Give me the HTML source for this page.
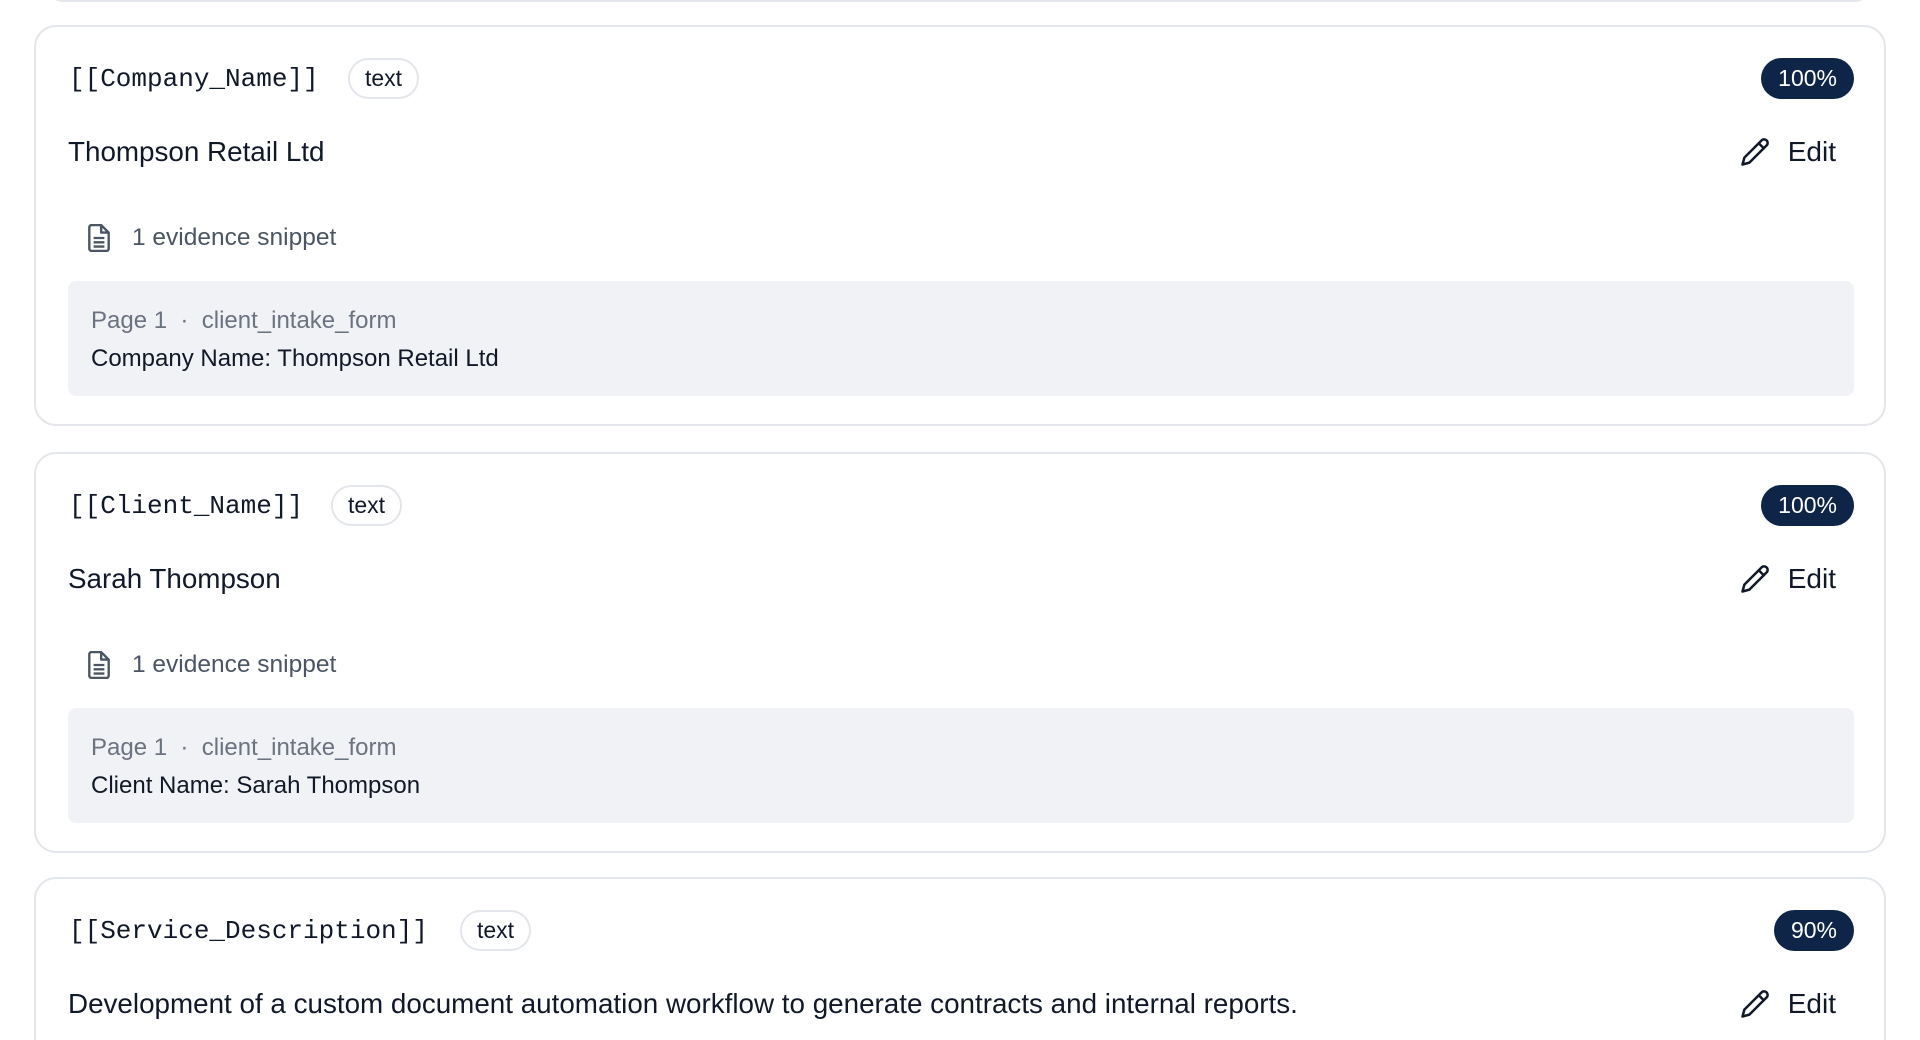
<!DOCTYPE html>
<html><head><style>
*{box-sizing:border-box;margin:0;padding:0}
html,body{width:1920px;height:1040px;overflow:hidden}
body{background:#fff;font-family:"Liberation Sans",sans-serif;color:#111827;position:relative}
.top{position:absolute;left:44px;top:-20px;width:1830px;height:22px;border:2px solid #e3e6eb;border-top:none;border-radius:0 0 20px 20px}
.card{position:absolute;left:34px;width:1852px;height:401px;border:2px solid #e3e6eb;border-radius:22px}
.t{position:absolute;left:33px;top:34px;font-family:"Liberation Mono",monospace;font-size:26px;line-height:36px;color:#111827}
.tag{position:absolute;top:31px;height:41px;border:2px solid #e3e6eb;border-radius:21px;font-size:23px;line-height:37px;padding:0 15px;color:#111827}
.pct{position:absolute;right:30px;top:31px;height:41px;background:#0f2547;color:#fff;border-radius:21px;font-size:23px;line-height:41px;padding:0 17px}
.val{position:absolute;left:32px;top:108px;font-size:27.8px;line-height:34px}
.edit{position:absolute;right:48px;top:108px;font-size:28px;line-height:34px;display:flex;align-items:center}
.edit svg{margin-right:18px}
.ev{position:absolute;left:52px;top:196px;font-size:24.5px;line-height:30px;color:#4b5563;display:flex;align-items:center}
.ev svg{margin-right:22px}
.snip{position:absolute;left:32px;right:30px;top:254px;height:115px;background:#f1f2f5;border-radius:8px;padding:21px 23px;font-size:24px;line-height:38px}
.snip .m{color:#6b7280}
</style></head><body>
<div class="top"></div>

<div class="card" style="top:25px">
<div class="t">[[Company_Name]]</div><div class="tag" style="left:312px">text</div>
<div class="pct">100%</div>
<div class="val">Thompson Retail Ltd</div>
<div class="edit"><svg width="30" height="30" viewBox="0 0 24 24" fill="none" stroke="#111827" stroke-width="2" stroke-linecap="round" stroke-linejoin="round"><path d="M17 3a2.85 2.85 0 1 1 4 4L7.5 20.5 2 22l1.5-5.5Z"/><path d="m15 5 4 4"/></svg>Edit</div>
<div class="ev"><svg width="22" height="28" viewBox="0 0 20 26" fill="none" stroke="#4b5563" stroke-width="2.2" stroke-linejoin="round"><path d="M3 1h9l7 7v15a2 2 0 0 1-2 2H3a2 2 0 0 1-2-2V3a2 2 0 0 1 2-2z"/><path d="M12 1v7h7"/><path d="M5 13h10M5 17h10M5 21h10"/></svg>1 evidence snippet</div>
<div class="snip"><div class="m">Page 1 &nbsp;·&nbsp; client_intake_form</div><div>Company Name: Thompson Retail Ltd</div></div>
</div>

<div class="card" style="top:452px">
<div class="t">[[Client_Name]]</div><div class="tag" style="left:295px">text</div>
<div class="pct">100%</div>
<div class="val">Sarah Thompson</div>
<div class="edit"><svg width="30" height="30" viewBox="0 0 24 24" fill="none" stroke="#111827" stroke-width="2" stroke-linecap="round" stroke-linejoin="round"><path d="M17 3a2.85 2.85 0 1 1 4 4L7.5 20.5 2 22l1.5-5.5Z"/><path d="m15 5 4 4"/></svg>Edit</div>
<div class="ev"><svg width="22" height="28" viewBox="0 0 20 26" fill="none" stroke="#4b5563" stroke-width="2.2" stroke-linejoin="round"><path d="M3 1h9l7 7v15a2 2 0 0 1-2 2H3a2 2 0 0 1-2-2V3a2 2 0 0 1 2-2z"/><path d="M12 1v7h7"/><path d="M5 13h10M5 17h10M5 21h10"/></svg>1 evidence snippet</div>
<div class="snip"><div class="m">Page 1 &nbsp;·&nbsp; client_intake_form</div><div>Client Name: Sarah Thompson</div></div>
</div>

<div class="card" style="top:877px;height:200px">
<div class="t">[[Service_Description]]</div><div class="tag" style="left:424px">text</div>
<div class="pct">90%</div>
<div class="val">Development of a custom document automation workflow to generate contracts and internal reports.</div>
<div class="edit"><svg width="30" height="30" viewBox="0 0 24 24" fill="none" stroke="#111827" stroke-width="2" stroke-linecap="round" stroke-linejoin="round"><path d="M17 3a2.85 2.85 0 1 1 4 4L7.5 20.5 2 22l1.5-5.5Z"/><path d="m15 5 4 4"/></svg>Edit</div>
</div>
</body></html>
